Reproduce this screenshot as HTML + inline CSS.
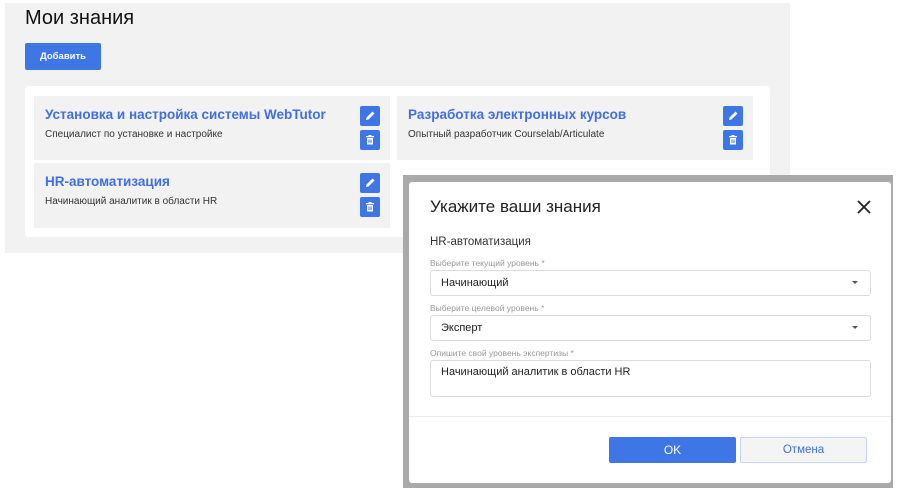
<!DOCTYPE html>
<html><head><meta charset="utf-8"><style>
*{box-sizing:border-box;margin:0;padding:0}
body{width:900px;height:491px;background:#fff;font-family:"Liberation Sans",sans-serif;position:relative;overflow:hidden}
.abs{position:absolute}
.page{left:5px;top:3px;width:785px;height:250px;background:#f2f2f2}
.h1{left:25px;top:7px;font-size:20px;color:#111}
.add{left:25px;top:43px;width:76px;height:27px;background:#3f76e6;border-radius:2px;color:#fff;font-size:9.5px;font-weight:bold;text-align:center;line-height:27px}
.wrap{left:25px;top:86px;width:745px;height:151px;background:#fff;border-radius:4px}
.card{background:#f2f2f2}
.ct{position:absolute;left:11px;top:11px;font-size:13.5px;font-weight:bold;color:#3f6fe0}
.cs{position:absolute;left:11px;top:33px;font-size:10px;color:#333}
.ib{position:absolute;width:20px;height:20px;background:#3f76e6;border-radius:2px}
.ib svg{display:block}
.ov{left:403px;top:175px;width:490px;height:313px;background:#a9a9a9}
.modal{left:409px;top:182px;width:482px;height:301px;background:#fff;border-radius:3px}
.mt{left:430px;top:197px;font-size:17px;color:#222}
.lab{font-size:8.5px;color:#999;left:430px}
.sel{left:430px;width:441px;height:26px;border:1px solid #dcdcdc;border-radius:3px;font-size:11px;color:#222;padding-left:10px;line-height:24px}
.arr{position:absolute;right:12px;top:10px;width:0;height:0;border-left:3px solid transparent;border-right:3px solid transparent;border-top:3px solid #555}
</style></head><body>
<div class="abs page"></div>
<div class="abs h1">Мои знания</div>
<div class="abs add">Добавить</div>
<div class="abs wrap"></div>
<div class="abs card" style="left:34px;top:96px;width:356px;height:64px">
<div class="ct">Установка и настройка системы WebTutor</div>
<div class="cs">Специалист по установке и настройке</div>
</div>
<div class="abs card" style="left:397px;top:96px;width:356px;height:64px">
<div class="ct">Разработка электронных курсов</div>
<div class="cs">Опытный разработчик Courselab/Articulate</div>
</div>
<div class="abs card" style="left:34px;top:163px;width:356px;height:65px">
<div class="ct">HR-автоматизация</div>
<div class="cs">Начинающий аналитик в области HR</div>
</div>
<div class="abs" style="left:0;top:0">
<div class="ib" style="left:360px;top:106px"><svg width="20" height="20"><path d="M6 14l0.5-2.5 6-6 2 2-6 6z" fill="#fff"/></svg></div>
<div class="ib" style="left:360px;top:130px"><svg width="20" height="20"><path d="M6 6h8v1.3H6zM8.5 5h3v1h-3zM7 8h6v6.5H7z" fill="#fff"/><path d="M9 9.5v3.5M11 9.5v3.5" stroke="#3f76e6" stroke-width="1"/></svg></div>
<div class="ib" style="left:723px;top:106px"><svg width="20" height="20"><path d="M6 14l0.5-2.5 6-6 2 2-6 6z" fill="#fff"/></svg></div>
<div class="ib" style="left:723px;top:130px"><svg width="20" height="20"><path d="M6 6h8v1.3H6zM8.5 5h3v1h-3zM7 8h6v6.5H7z" fill="#fff"/><path d="M9 9.5v3.5M11 9.5v3.5" stroke="#3f76e6" stroke-width="1"/></svg></div>
<div class="ib" style="left:360px;top:173px"><svg width="20" height="20"><path d="M6 14l0.5-2.5 6-6 2 2-6 6z" fill="#fff"/></svg></div>
<div class="ib" style="left:360px;top:197px"><svg width="20" height="20"><path d="M6 6h8v1.3H6zM8.5 5h3v1h-3zM7 8h6v6.5H7z" fill="#fff"/><path d="M9 9.5v3.5M11 9.5v3.5" stroke="#3f76e6" stroke-width="1"/></svg></div>
</div>
<div class="abs ov"></div>
<div class="abs modal"></div>
<div class="abs mt">Укажите ваши знания</div>
<svg class="abs" style="left:857px;top:200px" width="14" height="14"><path d="M1 1L13 13M13 1L1 13" stroke="#222" stroke-width="1.8"/></svg>
<div class="abs" style="left:430px;top:236px;font-size:11.5px;color:#333">HR-автоматизация</div>
<div class="abs lab" style="top:258px">Выберите текущий уровень *</div>
<div class="abs sel" style="top:270px">Начинающий<div class="arr"></div></div>
<div class="abs lab" style="top:303px">Выберите целевой уровень *</div>
<div class="abs sel" style="top:315px">Эксперт<div class="arr"></div></div>
<div class="abs lab" style="top:348px">Опишите свой уровень экспертизы *</div>
<div class="abs sel" style="top:360px;height:37px;line-height:normal;padding-top:5px">Начинающий аналитик в области HR</div>
<div class="abs" style="left:409px;top:416px;width:482px;height:1px;background:#ececec"></div>
<div class="abs" style="left:609px;top:437px;width:127px;height:26px;background:#3f76e6;border-radius:2px;color:#fff;font-size:12px;text-align:center;line-height:26px">OK</div>
<div class="abs" style="left:740px;top:437px;width:127px;height:26px;background:#f4f4f4;border:1px solid #c7d5f3;border-radius:2px;color:#3f6fe0;font-size:11.5px;text-align:center;line-height:24px">Отмена</div>
</body></html>
